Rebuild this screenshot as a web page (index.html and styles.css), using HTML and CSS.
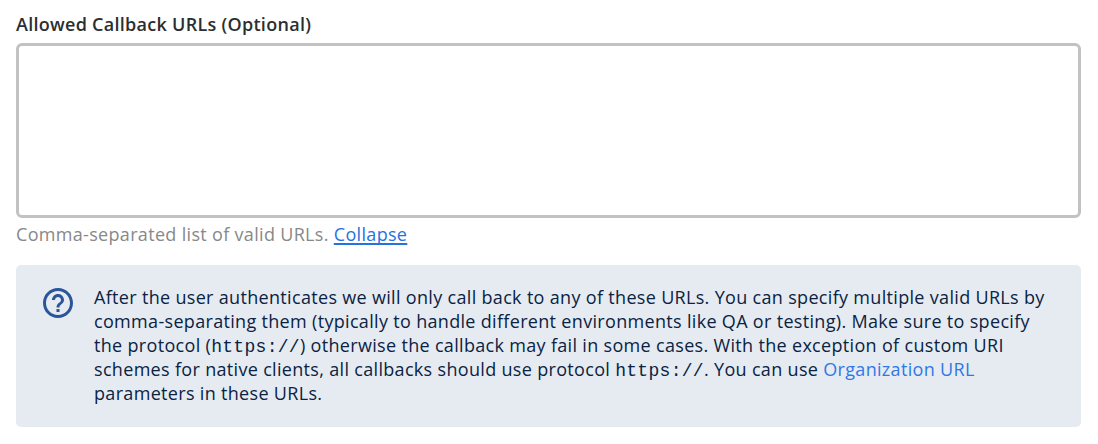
FILE: index.html
```html
<!DOCTYPE html>
<html lang="en">
<head>
<meta charset="utf-8">
<title>Allowed Callback URLs</title>
<link rel="stylesheet" href="styles.css">
</head>
<body>
<main class="field">
  <label class="label" for="callbacks">Allowed Callback URLs (Optional)</label>
  <textarea class="input" id="callbacks"></textarea>
  <p class="hint">Comma-separated list of valid URLs. <a class="collapse" href="#">Collapse</a></p>
  <section class="callout">
    <svg class="icon" viewBox="0 0 24 24" fill="currentColor">
      <path d="M11 18h2v-2h-2v2zm1-16C6.480 2 2 6.480 2 12s4.480 10 10 10 10-4.480 10-10S17.520 2 12 2zm0 18c-4.410 0-8-3.590-8-8s3.590-8 8-8 8 3.590 8 8-3.590 8-8 8zm0-14c-2.210 0-4 1.790-4 4h2c0-1.100.9-2 2-2s2 .9 2 2c0 2-3 1.750-3 5h2c0-2.250 3-2.500 3-5 0-2.210-1.790-4-4-4z"/>
    </svg>
    <p class="copy">
      <span class="line">After the user authenticates we will only call back to any of these URLs. You can specify multiple valid URLs by</span>
      <span class="line">comma-separating them (typically to handle different environments like QA or testing). Make sure to specify</span>
      <span class="line">the protocol (<code>https://</code>) otherwise the callback may fail in some cases. With the exception of custom URI</span>
      <span class="line">schemes for native clients, all callbacks should use protocol <code>https://</code>. You can use <a class="link" href="#">Organization URL</a></span>
      <span class="line">parameters in these URLs.</span>
    </p>
  </section>
</main>
</body>
</html>
```
FILE: styles.css
```css
* { box-sizing: border-box; }
body { margin: 0; background: #fff; font-family: "Open Sans", sans-serif; letter-spacing: 0.32px; }
.field { padding: 12px 17px 0 16px; }
.label { display: block; height: 31px; font-size: 18px; line-height: 24px; font-weight: 600; letter-spacing: 0.28px; color: #2b2e31; }
.input { display: block; width: 100%; height: 175px; border: 3px solid #c2c2c2; border-radius: 6px; background: #fff; resize: none; outline: none; }
.hint { margin: 4px 0 0; height: 43px; font-size: 18px; line-height: 24px; color: #888; }
.collapse { color: #2672df; text-decoration: underline; text-decoration-skip-ink: none; text-decoration-thickness: 1.5px; text-underline-offset: 2px; }
.callout { display: flex; gap: 18px; height: 162px; padding: 20px 24px; border-radius: 5px; background: #e6ebf2; color: #0a2342; }
.icon { flex: none; width: 36px; height: 36px; margin-top: -0.5px; color: #2a5699; }
.copy { margin: 0; font-size: 18px; line-height: 24px; white-space: nowrap; }
.line { display: block; height: 24px; }
.copy code { font-family: "Courier New", "Liberation Mono", monospace; font-size: 18px; line-height: 1; letter-spacing: 0.3px; }
.link { color: #2f78e6; text-decoration: none; }
```
